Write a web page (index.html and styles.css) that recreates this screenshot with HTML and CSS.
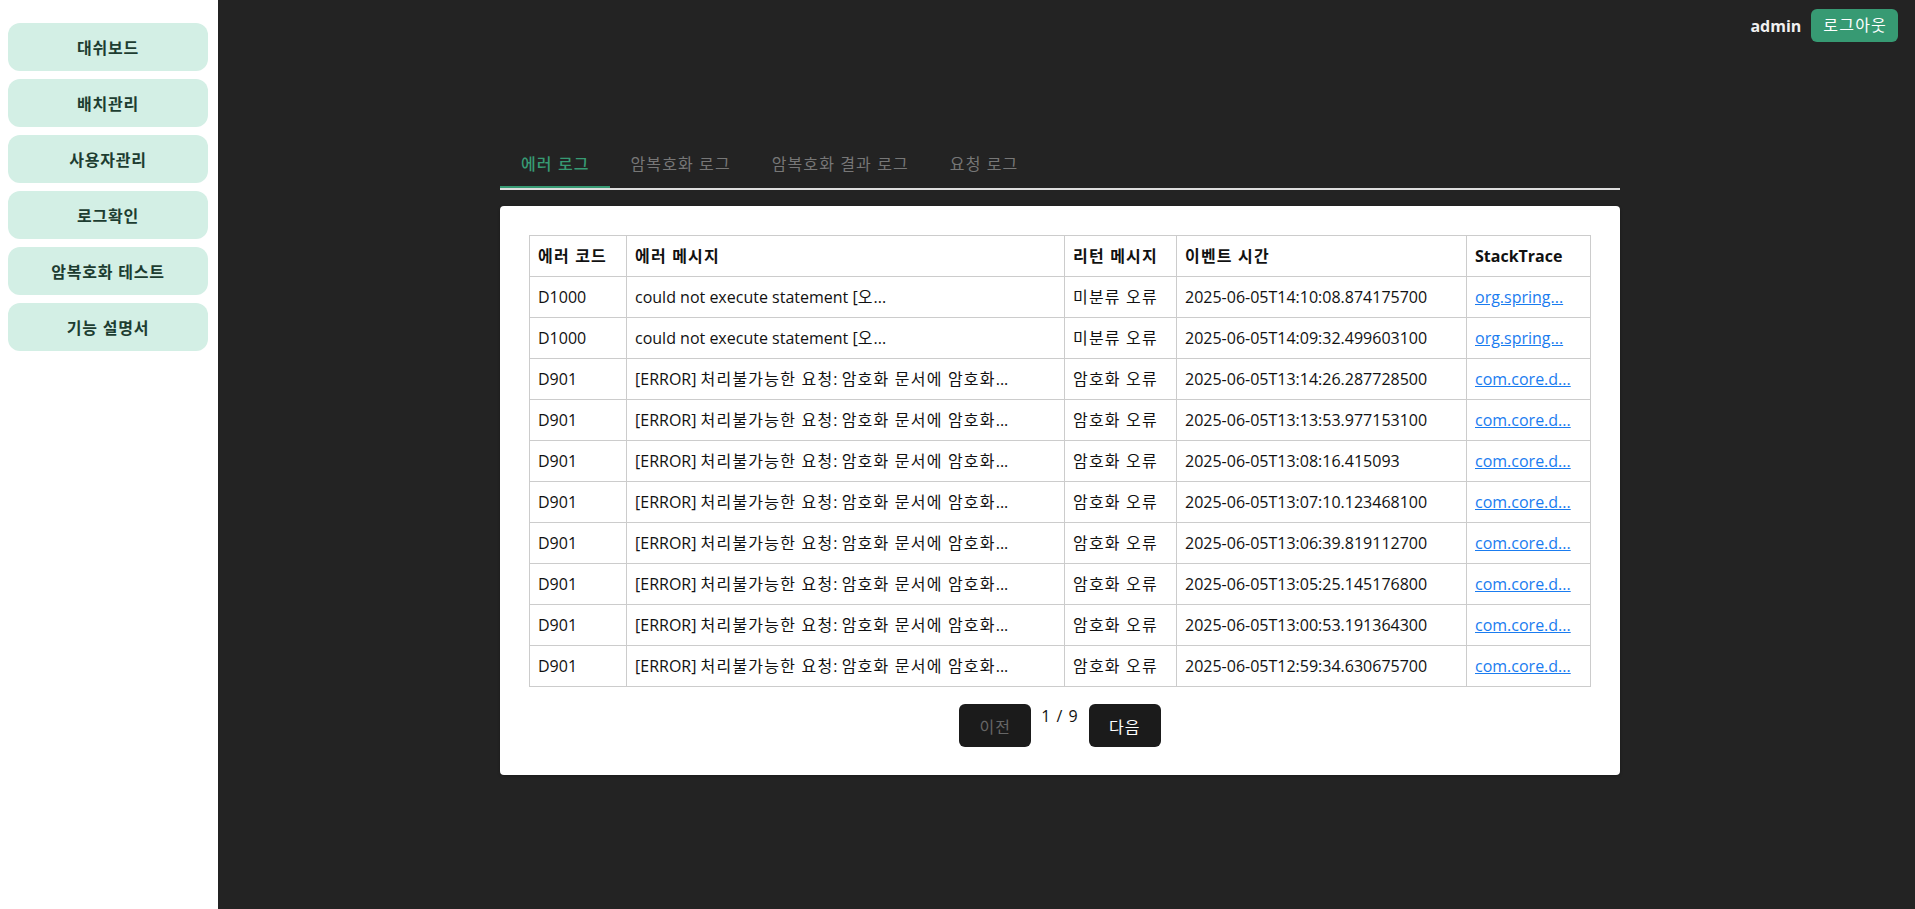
FILE: index.html
```html
<!DOCTYPE html>
<html lang="ko">
<head>
<meta charset="utf-8">
<title>로그확인</title>
<link rel="stylesheet" href="styles.css">
</head>
<body>
<div class="layout">
  <aside class="sidebar">
    <nav class="menu">
      <a class="menu-item">대쉬보드</a>
      <a class="menu-item">배치관리</a>
      <a class="menu-item">사용자관리</a>
      <a class="menu-item">로그확인</a>
      <a class="menu-item">암복호화 테스트</a>
      <a class="menu-item">기능 설명서</a>
    </nav>
  </aside>
  <main class="main">
    <header class="topbar">
      <span class="user">admin</span>
      <button class="logout">로그아웃</button>
    </header>
    <section class="content">
      <div class="tabs">
        <div class="tab active">에러 로그</div>
        <div class="tab">암복호화 로그</div>
        <div class="tab">암복호화 결과 로그</div>
        <div class="tab">요청 로그</div>
      </div>
      <div class="card">
        <table class="log-table">
          <colgroup>
            <col class="c1"><col class="c2"><col class="c3"><col class="c4"><col class="c5">
          </colgroup>
          <thead>
            <tr><th class="ko">에러 코드</th><th class="ko">에러 메시지</th><th class="ko">리턴 메시지</th><th class="ko">이벤트 시간</th><th>StackTrace</th></tr>
          </thead>
          <tbody>
            <tr><td>D1000</td><td>could not execute statement [<span class="ko">오</span>...</td><td class="ko">미분류 오류</td><td>2025-06-05T14:10:08.874175700</td><td><a class="link">org.spring...</a></td></tr>
            <tr><td>D1000</td><td>could not execute statement [<span class="ko">오</span>...</td><td class="ko">미분류 오류</td><td>2025-06-05T14:09:32.499603100</td><td><a class="link">org.spring...</a></td></tr>
            <tr><td>D901</td><td>[ERROR] <span class="ko">처리불가능한 요청</span>: <span class="ko">암호화 문서에 암호화</span>...</td><td class="ko">암호화 오류</td><td>2025-06-05T13:14:26.287728500</td><td><a class="link">com.core.d...</a></td></tr>
            <tr><td>D901</td><td>[ERROR] <span class="ko">처리불가능한 요청</span>: <span class="ko">암호화 문서에 암호화</span>...</td><td class="ko">암호화 오류</td><td>2025-06-05T13:13:53.977153100</td><td><a class="link">com.core.d...</a></td></tr>
            <tr><td>D901</td><td>[ERROR] <span class="ko">처리불가능한 요청</span>: <span class="ko">암호화 문서에 암호화</span>...</td><td class="ko">암호화 오류</td><td>2025-06-05T13:08:16.415093</td><td><a class="link">com.core.d...</a></td></tr>
            <tr><td>D901</td><td>[ERROR] <span class="ko">처리불가능한 요청</span>: <span class="ko">암호화 문서에 암호화</span>...</td><td class="ko">암호화 오류</td><td>2025-06-05T13:07:10.123468100</td><td><a class="link">com.core.d...</a></td></tr>
            <tr><td>D901</td><td>[ERROR] <span class="ko">처리불가능한 요청</span>: <span class="ko">암호화 문서에 암호화</span>...</td><td class="ko">암호화 오류</td><td>2025-06-05T13:06:39.819112700</td><td><a class="link">com.core.d...</a></td></tr>
            <tr><td>D901</td><td>[ERROR] <span class="ko">처리불가능한 요청</span>: <span class="ko">암호화 문서에 암호화</span>...</td><td class="ko">암호화 오류</td><td>2025-06-05T13:05:25.145176800</td><td><a class="link">com.core.d...</a></td></tr>
            <tr><td>D901</td><td>[ERROR] <span class="ko">처리불가능한 요청</span>: <span class="ko">암호화 문서에 암호화</span>...</td><td class="ko">암호화 오류</td><td>2025-06-05T13:00:53.191364300</td><td><a class="link">com.core.d...</a></td></tr>
            <tr><td>D901</td><td>[ERROR] <span class="ko">처리불가능한 요청</span>: <span class="ko">암호화 문서에 암호화</span>...</td><td class="ko">암호화 오류</td><td>2025-06-05T12:59:34.630675700</td><td><a class="link">com.core.d...</a></td></tr>
          </tbody>
        </table>
        <div class="pager">
          <button class="page-btn disabled">이전</button>
          <span class="page-info">1 / 9</span>
          <button class="page-btn">다음</button>
        </div>
      </div>
    </section>
  </main>
</div>
</body>
</html>
```

FILE: styles.css
```css
* { box-sizing: border-box; }
html, body { margin: 0; padding: 0; }
body {
  font-family: "Open Sans", "Noto Sans CJK KR", sans-serif;
  font-size: 16px;
  background: #232323;
}
.ko { letter-spacing: 1.2px; }
.layout {
  display: flex;
  min-height: 909px;
}
.sidebar {
  width: 218px;
  flex: 0 0 218px;
  background: #ffffff;
  padding: 23px 10px 0 8px;
}
.menu {
  display: flex;
  flex-direction: column;
  gap: 8px;
}
.menu-item {
  display: flex;
  align-items: center;
  justify-content: center;
  height: 48px;
  border-radius: 12px;
  background: #d3efe5;
  color: #1d3d31;
  font-weight: 700;
  font-size: 16px;
  letter-spacing: 0.8px;
  cursor: pointer;
}
.main {
  flex: 1;
  background: #232323;
  padding: 0 13px 0 0;
}
.topbar {
  display: flex;
  justify-content: flex-end;
  align-items: center;
  gap: 10px;
  padding: 9px 4px 0 0;
  height: 42px;
}
.user {
  color: #f0f0f0;
  font-weight: 700;
  font-size: 16px;
}
.logout {
  font-family: inherit;
  font-size: 16px;
  letter-spacing: 1.2px;
  height: 33px;
  padding: 0 11px 0 12px;
  border: none;
  border-radius: 6px;
  background: #379a73;
  color: #ffffff;
  line-height: 33px;
}
.content {
  width: 1120px;
  margin: 101px auto 0;
}
.tabs {
  display: flex;
  border-bottom: 2px solid #dddddd;
}
.tab {
  padding: 10px 20px 10px 21px;
  line-height: 23px;
  color: #777777;
  font-size: 16px;
  letter-spacing: 1.1px;
  border-bottom: 2px solid transparent;
}
.tab.active {
  color: #379a73;
  font-weight: 500;
  border-bottom-color: #379a73;
}
.card {
  margin-top: 16px;
  background: #ffffff;
  border-radius: 4px;
  padding: 29px 29px 28px;
  box-shadow: 0 1px 3px rgba(0,0,0,0.25);
}
.log-table {
  width: 100%;
  border-collapse: collapse;
  table-layout: fixed;
}
.c1 { width: 97px; }
.c2 { width: 438px; }
.c3 { width: 112px; }
.c4 { width: 290px; }
.c5 { width: auto; }
.log-table th,
.log-table td {
  border: 1px solid #cccccc;
  padding: 9px 10px 9px 8px;
  line-height: 22px;
  text-align: left;
  white-space: nowrap;
  overflow: hidden;
  color: #111111;
  font-size: 16px;
}
.log-table th {
  font-weight: 700;
}
.link {
  color: #1a7cf0;
  text-decoration: underline;
  cursor: pointer;
}
.pager {
  display: flex;
  justify-content: center;
  gap: 10px;
  margin-top: 17px;
}
.page-btn {
  font-family: inherit;
  font-size: 16px;
  letter-spacing: 1px;
  width: 72px;
  height: 43px;
  border: none;
  border-radius: 6px;
  background: #1b1b1b;
  color: #ffffff;
}
.page-btn.disabled {
  color: #666666;
}
.page-info {
  color: #111111;
  font-size: 16px;
  line-height: 22px;
  padding-top: 1px;
  letter-spacing: 1px;
}
```
